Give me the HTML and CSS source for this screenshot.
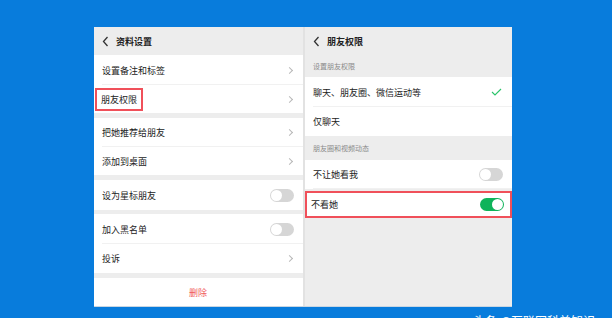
FILE: index.html
```html
<!DOCTYPE html>
<html lang="zh">
<head>
<meta charset="utf-8">
<link rel="stylesheet" href="styles.css">
</head>
<body>
<div class="frame">
  <div class="panel left">
    <div class="header">
      <svg class="back" width="7" height="11" viewBox="0 0 7 11"><polyline points="5.5,1 1.5,5.5 5.5,10" fill="none" stroke="#333" stroke-width="1.3"/></svg>
      <span>资料设置</span>
    </div>
    <div class="row h30"><span>设置备注和标签</span><i class="chev"></i></div>
    <div class="row h28 last"><span class="boxed">朋友权限</span><i class="chev"></i></div>
    <div class="gap g5"></div>
    <div class="row h29"><span>把她推荐给朋友</span><i class="chev"></i></div>
    <div class="row h28 last"><span>添加到桌面</span><i class="chev"></i></div>
    <div class="gap g5"></div>
    <div class="row h30 last"><span>设为星标朋友</span><i class="toggle"></i></div>
    <div class="gap g4"></div>
    <div class="row h30"><span>加入黑名单</span><i class="toggle"></i></div>
    <div class="row h29 last"><span>投诉</span><i class="chev"></i></div>
    <div class="gap g5"></div>
    <div class="row h28 last del"><span>删除</span></div>
  </div>
  <div class="divider"></div>
  <div class="panel right">
    <div class="header">
      <svg class="back" width="7" height="11" viewBox="0 0 7 11"><polyline points="5.5,1 1.5,5.5 5.5,10" fill="none" stroke="#333" stroke-width="1.3"/></svg>
      <span>朋友权限</span>
    </div>
    <div class="label h22">设置朋友权限</div>
    <div class="row h30"><span>聊天、朋友圈、微信运动等</span>
      <svg class="check" width="11" height="8" viewBox="0 0 11 8"><polyline points="1,4 4,7 10,1" fill="none" stroke="#2ac46a" stroke-width="1.1"/></svg>
    </div>
    <div class="row h29 last"><span>仅聊天</span></div>
    <div class="label h24">朋友圈和视频动态</div>
    <div class="row h29"><span>不让她看我</span><i class="toggle"></i></div>
    <div class="row h27 last redbox"><span>不看她</span><i class="toggle on"></i></div>
  </div>
</div>
<div class="footer">头条 @互联网科普知识</div>
</body>
</html>
```
FILE: styles.css
```css
* { box-sizing: border-box; margin: 0; padding: 0; }
html, body { width: 612px; height: 318px; overflow: hidden; }
body {
  background: #087cdc;
  font-family: "Noto Sans CJK SC", "Noto Sans", sans-serif;
  color: #222;
  font-size: 9px;
}
.frame {
  margin: 27px 0 0 94px;
  width: 418px;
  height: 280px;
  display: grid;
  grid-template-columns: 209px 2px 207px;
  border-bottom: 1px solid #c9d6e2;
}
.panel { background: #ededed; display: flex; flex-direction: column; height: 279px; }
.divider { background: #e2e2e2; height: 279px; }
.header {
  height: 28px;
  display: flex;
  align-items: center;
  padding-left: 8px;
  gap: 7px;
  font-weight: 700;
  color: #222;
  background: #ededed;
}
.row {
  background: #fff;
  display: flex;
  align-items: center;
  justify-content: space-between;
  padding: 0 9px 0 8px;
  position: relative;
}
.row::after {
  content: "";
  position: absolute;
  left: 8px; right: 0; bottom: 0;
  height: 1px;
  background: #f1f1f1;
}
.row.last::after { display: none; }
.h22 { height: 22px; }
.h24 { height: 24px; }
.h27 { height: 27px; }
.h28 { height: 28px; }
.h29 { height: 29px; }
.h30 { height: 30px; }
.gap { flex: none; }
.g4 { height: 4px; }
.g5 { height: 5px; }
.chev {
  width: 5px; height: 5px;
  border-top: 1px solid #b8b8b8;
  border-right: 1px solid #b8b8b8;
  transform: rotate(45deg);
  margin-right: 2px;
}
.toggle {
  width: 24px; height: 13px;
  border-radius: 7px;
  background: #d6d6d6;
  position: relative;
}
.toggle::before {
  content: "";
  position: absolute;
  left: 1px; top: 1px;
  width: 11px; height: 11px;
  border-radius: 50%;
  background: #fff;
}
.toggle.on { background: #0fb35a; }
.toggle.on::before { left: 12px; }
.boxed {
  outline: 2px solid #f0505a;
  outline-offset: 0;
  padding: 4px 4px 4px 4px;
  margin-left: -5px;
  line-height: 11px;
}
.del { justify-content: center; color: #f05a5a; }
.label {
  display: flex;
  align-items: center;
  padding-left: 8px;
  font-size: 7px;
  color: #8a8a8a;
}
.check { margin-right: 1px; }
.redbox {
  outline: 2px solid #f0505a;
  outline-offset: -2px;
  margin-top: 2px;
  padding-left: 6px;
  padding-right: 8px;
}
.footer {
  margin: 7px 0 0 473px;
  color: #fff;
  font-size: 12px;
  line-height: 14px;
  white-space: nowrap;
}
```
